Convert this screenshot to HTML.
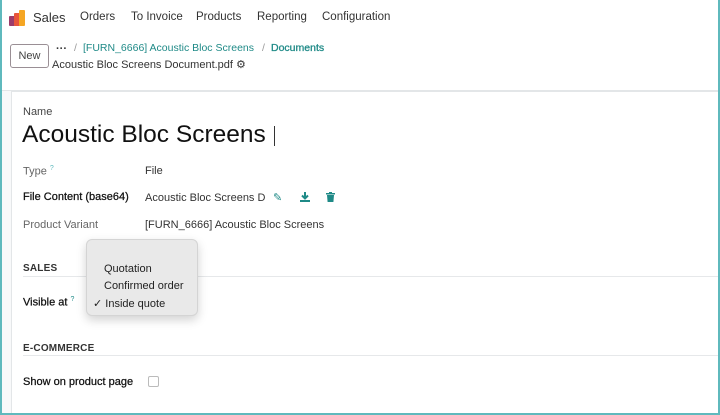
<!DOCTYPE html>
<html><head><style>
*{box-sizing:border-box;margin:0;padding:0}
body{width:720px;height:415px;overflow:hidden;font-family:"Liberation Sans",sans-serif;background:#fff;position:relative;color:#222}
.frame{position:absolute;inset:0;border:2px solid #5fb9bd;border-top:none;pointer-events:none;z-index:10}
.nav{position:absolute;top:0;left:0;right:0;height:36px}
.nav span{position:absolute;top:11px;font-size:11.5px;color:#333}
.ctrl{position:absolute;top:36px;left:0;right:0;height:55px;border-bottom:1px solid #e3e6e8}
.main{position:absolute;top:91px;left:0;right:0;bottom:0;background:#f8f9fa}
.sheet{position:absolute;left:11px;top:0;right:0;bottom:0;background:#fff;border-left:1px solid #e3e6e8;border-top:1px solid #e3e6e8}
.a{position:absolute;white-space:nowrap}
.lbl{font-size:11px;color:#666}
.val{font-size:11px;color:#333}
.b{color:#111 !important;font-size:11px;-webkit-text-stroke:0.25px #111}
.sec{font-size:10px;font-weight:bold;color:#333;letter-spacing:.2px}
.hr{position:absolute;left:23px;right:2px;height:1px;background:#e6e8ea}
</style></head><body>
<div class="nav">
<svg class="a" style="left:9px;top:9px" width="18" height="17" viewBox="0 0 18 17"><rect x="0" y="7" width="6" height="10" rx="1" fill="#9c3b6a"/><rect x="5" y="4" width="6" height="13" rx="1" fill="#e8553a"/><rect x="10" y="1" width="6" height="16" rx="1" fill="#f5a623"/></svg>
<span style="left:33px;font-size:13px;top:10px">Sales</span>
<span style="left:80px">Orders</span>
<span style="left:131px">To Invoice</span>
<span style="left:196px">Products</span>
<span style="left:257px">Reporting</span>
<span style="left:322px">Configuration</span>
</div>
<div class="ctrl">
<div class="a" style="left:10px;top:8px;width:39px;height:24px;border:1px solid #9a8f95;border-radius:3px;font-size:11px;color:#444;text-align:center;line-height:22px">New</div>
<div class="a" style="left:56px;top:7px;font-size:11px;font-weight:bold;color:#333">···</div>
<div class="a" style="left:74px;top:6px;font-size:10.5px;color:#999">/</div>
<div class="a" style="left:83px;top:6px;font-size:10.5px;color:#1f8a87">[FURN_6666] Acoustic Bloc Screens</div>
<div class="a" style="left:262px;top:6px;font-size:10.5px;color:#999">/</div>
<div class="a" style="left:271px;top:6px;font-size:10.5px;color:#1f8a87;-webkit-text-stroke:0.3px #1f8a87">Documents</div>
<div class="a" style="left:52px;top:22px;font-size:11px;color:#333">Acoustic Bloc Screens Document.pdf <span style="font-size:11px">⚙</span></div>
</div>
<div class="main"><div class="sheet"></div></div>
<div class="a lbl" style="left:23px;top:106px;color:#444">Name</div>
<div class="a" style="left:22px;top:121px;font-size:24.5px;color:#111">Acoustic Bloc Screens</div>
<div class="a" style="left:274px;top:126px;width:1px;height:20px;background:#333"></div>
<div class="a lbl" style="left:23px;top:165px">Type <sup style="color:#5fb9bd;font-size:7px">?</sup></div>
<div class="a val" style="left:145px;top:165px">File</div>
<div class="a val b" style="left:23px;top:191px">File Content (base64)</div>
<div class="a val" style="left:145px;top:192px">Acoustic Bloc Screens D</div>
<div class="a" style="left:273px;top:191px;font-size:11px;color:#1f8a87">✎</div>
<svg class="a" style="left:300px;top:192px" width="10" height="10" viewBox="0 0 10 10"><path d="M5 0v6M2 3.5l3 3 3-3" stroke="#1f8a87" stroke-width="2" fill="none"/><rect x="0" y="8" width="10" height="2" fill="#1f8a87"/></svg>
<svg class="a" style="left:326px;top:192px" width="9" height="10" viewBox="0 0 9 10"><rect x="0" y="1" width="9" height="1.5" fill="#1f8a87"/><rect x="3" y="0" width="3" height="1.5" fill="#1f8a87"/><path d="M1 3h7l-.6 7H1.6z" fill="#1f8a87"/></svg>
<div class="a lbl" style="left:23px;top:219px">Product Variant</div>
<div class="a val" style="left:145px;top:219px">[FURN_6666] Acoustic Bloc Screens</div>
<div class="a sec" style="left:23px;top:263px">SALES</div>
<div class="hr" style="top:276px"></div>
<div class="a val b" style="left:23px;top:296px">Visible at <sup style="color:#1f8a87;font-size:7px;-webkit-text-stroke:0">?</sup></div>
<div class="a sec" style="left:23px;top:343px">E-COMMERCE</div>
<div class="hr" style="top:355px"></div>
<div class="a val b" style="left:23px;top:376px">Show on product page</div>
<div class="a" style="left:148px;top:376px;width:11px;height:11px;border:1px solid #bbb;border-radius:2px"></div>
<div class="a" style="left:86px;top:239px;width:112px;height:77px;background:#e9e9e9;border:1px solid #d4d4d4;border-radius:6px;box-shadow:0 4px 10px rgba(0,0,0,.18);z-index:5">
<div class="a val" style="left:17px;top:23px;color:#222">Quotation</div>
<div class="a val" style="left:17px;top:40px;color:#222">Confirmed order</div>
<div class="a val" style="left:6px;top:57px;color:#222">✓ Inside quote</div>
</div>
<div class="frame"></div>
</body></html>
